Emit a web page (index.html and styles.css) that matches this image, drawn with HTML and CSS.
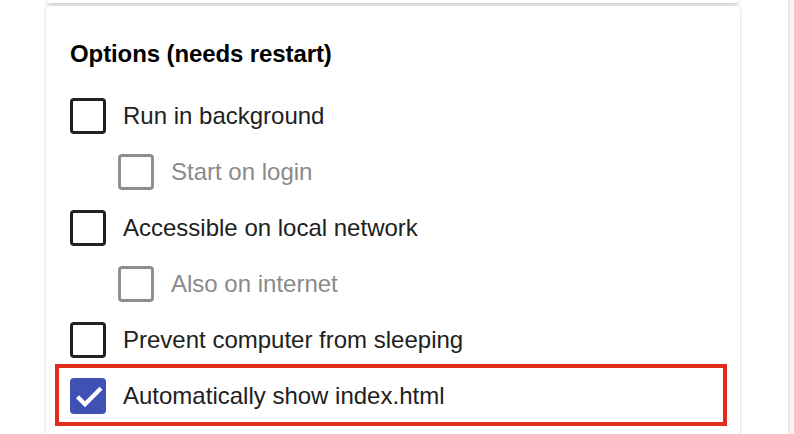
FILE: index.html
```html
<!DOCTYPE html>
<html lang="en">
<head>
<meta charset="utf-8">
<title>Options</title>
<link rel="stylesheet" href="styles.css">
</head>
<body>
<div class="page">
  <main class="column">
    <div class="card card-prev"></div>
    <section class="card card-options">
      <h2 class="title">Options (needs restart)</h2>
      <ul class="options">
        <li class="option">
          <span class="box"></span>
          <span class="label">Run in background</span>
        </li>
        <li class="option sub disabled">
          <span class="box"></span>
          <span class="label">Start on login</span>
        </li>
        <li class="option">
          <span class="box"></span>
          <span class="label">Accessible on local network</span>
        </li>
        <li class="option sub disabled">
          <span class="box"></span>
          <span class="label">Also on internet</span>
        </li>
        <li class="option">
          <span class="box"></span>
          <span class="label">Prevent computer from sleeping</span>
        </li>
        <li class="option highlighted">
          <span class="box checked">
            <svg class="tick" viewBox="0 0 36 36" width="36" height="36" aria-hidden="true">
              <path d="M7.5 18.8 L15 26.3 L31 10.3" fill="none" stroke="#ffffff" stroke-width="4.2" stroke-linecap="butt" stroke-linejoin="miter"/>
            </svg>
          </span>
          <span class="label">Automatically show index.html</span>
        </li>
      </ul>
    </section>
  </main>
  <aside class="edge"></aside>
</div>
</body>
</html>
```
FILE: styles.css
```css
* {
  box-sizing: border-box;
}

html, body {
  margin: 0;
  padding: 0;
  background: #ffffff;
}

body {
  font-family: "Liberation Sans", Arial, Helvetica, sans-serif;
  color: #212121;
  overflow: hidden;
  height: 434px;
}

.page {
  display: flex;
  width: 794px;
  height: 434px;
}

.column {
  width: 788px;
  padding-left: 46px;
}

.card {
  background: #ffffff;
  border-radius: 4px;
}

.card-prev {
  width: 691px;
  margin-left: 1px;
  height: 3px;
  border-radius: 0 0 4px 4px;
  box-shadow: 0 1px 4px rgba(0, 0, 0, 0.35);
}

.card-options {
  width: 694px;
  margin-top: 3px;
  padding: 34px 24px 24px 24px;
  box-shadow: 0 1px 3px rgba(0, 0, 0, 0.18), 0 0 2px rgba(0, 0, 0, 0.08);
  min-height: 460px;
}

.title {
  margin: 0;
  font-size: 24px;
  line-height: 28px;
  font-weight: 700;
  color: #000000;
  letter-spacing: -0.1px;
}

.options {
  list-style: none;
  margin: 20px 0 0 0;
  padding: 0;
}

.option {
  display: flex;
  align-items: center;
  gap: 17px;
  height: 56px;
  font-size: 24px;
  line-height: 28px;
}

.option.sub {
  padding-left: 48px;
}

.box {
  flex: none;
  width: 36px;
  height: 36px;
  border: 3px solid #212121;
  border-radius: 4px;
  position: relative;
}

.disabled .box {
  border-color: #8e8e8e;
}

.disabled .label {
  color: #8a8a8a;
}

.box.checked {
  border: none;
  background: #3f51b5;
}

.tick {
  display: block;
}

.highlighted {
  position: relative;
}

.highlighted::after {
  content: "";
  position: absolute;
  left: -15px;
  right: -11px;
  top: -4px;
  bottom: -2px;
  border: 4px solid #e22d1d;
  pointer-events: none;
}

.edge {
  width: 6px;
  border-left: 1px solid #e4e4e4;
  background: linear-gradient(to right, #ededed, #fafafa);
}
```
